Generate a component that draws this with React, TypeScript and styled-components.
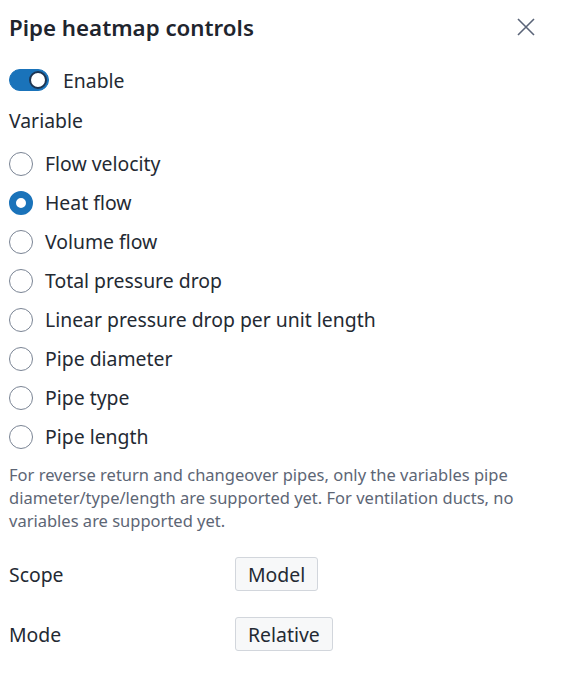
import { useState } from "react";
import styled, { createGlobalStyle } from "styled-components";

const GlobalStyle = createGlobalStyle`
  html, body {
    margin: 0;
    padding: 0;
    background: #ffffff;
  }
  body {
    font-family: "Noto Sans", "Open Sans", sans-serif;
    color: #242a33;
  }
`;

const Panel = styled.div`
  width: 568px;
  box-sizing: border-box;
  padding: 8px 9px 20px;
  display: flex;
  flex-direction: column;
`;

const Header = styled.div`
  display: flex;
  align-items: center;
  justify-content: space-between;
  height: 38px;
`;

const Title = styled.h2`
  margin: 0;
  font-size: 22.3px;
  font-weight: 600;
  color: #1f252e;
`;

const CloseButton = styled.button`
  width: 32px;
  height: 32px;
  margin-right: 17px;
  border: none;
  background: transparent;
  padding: 0;
  display: grid;
  place-items: center;
  cursor: pointer;
  color: #5a6478;
`;

const ToggleRow = styled.label`
  display: flex;
  align-items: center;
  gap: 14px;
  height: 40px;
  margin-top: 14px;
  font-size: 19.4px;
  cursor: pointer;
`;

const Track = styled.span<{ $on: boolean }>`
  width: 40px;
  height: 22px;
  border-radius: 11px;
  box-sizing: border-box;
  background: ${({ $on }) => ($on ? "#1a73ba" : "#ffffff")};
  border: 1px solid ${({ $on }) => ($on ? "#1a73ba" : "#7a8494")};
  display: flex;
  align-items: center;
  justify-content: ${({ $on }) => ($on ? "flex-end" : "flex-start")};
  padding: 0 1px;
`;

const Thumb = styled.span`
  width: 18px;
  height: 18px;
  border-radius: 50%;
  background: #ffffff;
  box-sizing: border-box;
  border: 2px solid #1c3553;
`;

const SectionLabel = styled.div`
  font-size: 19.4px;
  height: 40px;
  display: flex;
  align-items: center;
`;

const RadioList = styled.div`
  margin-top: 4px;
  display: flex;
  flex-direction: column;
`;

const RadioRow = styled.label`
  display: flex;
  align-items: center;
  gap: 12px;
  height: 39px;
  font-size: 19.4px;
  cursor: pointer;
`;

const RadioDot = styled.span<{ $checked: boolean }>`
  width: 24px;
  height: 24px;
  border-radius: 50%;
  box-sizing: border-box;
  flex-shrink: 0;
  border: ${({ $checked }) => ($checked ? "7px solid #1a73ba" : "1.5px solid #7a8494")};
  background: #ffffff;
`;

const Note = styled.p`
  margin: 7px 0 0;
  font-size: 16.5px;
  line-height: 23px;
  color: #5d6675;
  max-width: 548px;
`;

const FieldRows = styled.div`
  margin-top: 12px;
  display: flex;
  flex-direction: column;
`;

const FieldRow = styled.div`
  display: grid;
  grid-template-columns: 226px auto;
  align-items: center;
  height: 60px;
  font-size: 19.4px;
`;

const SelectButton = styled.button`
  justify-self: start;
  height: 34px;
  padding: 0 12px;
  font-family: inherit;
  font-size: 19.4px;
  color: #242a33;
  background: #f7f8f9;
  border: 1px solid #d2d6dc;
  border-radius: 3px;
  cursor: pointer;
`;

const variables = [
  "Flow velocity",
  "Heat flow",
  "Volume flow",
  "Total pressure drop",
  "Linear pressure drop per unit length",
  "Pipe diameter",
  "Pipe type",
  "Pipe length",
];

export default function App() {
  const [enabled, setEnabled] = useState(true);
  const [selected, setSelected] = useState("Heat flow");

  return (
    <>
      <GlobalStyle />
      <Panel>
        <Header>
          <Title>Pipe heatmap controls</Title>
          <CloseButton aria-label="Close">
            <svg width="18" height="18" viewBox="0 0 18 18" fill="none">
              <path d="M1 1L17 17M17 1L1 17" stroke="currentColor" strokeWidth="1.6" />
            </svg>
          </CloseButton>
        </Header>

        <ToggleRow onClick={() => setEnabled(!enabled)}>
          <Track $on={enabled}>
            <Thumb />
          </Track>
          Enable
        </ToggleRow>

        <SectionLabel>Variable</SectionLabel>

        <RadioList>
          {variables.map((v) => (
            <RadioRow key={v} onClick={() => setSelected(v)}>
              <RadioDot $checked={selected === v} />
              {v}
            </RadioRow>
          ))}
        </RadioList>

        <Note>
          For reverse return and changeover pipes, only the variables pipe
          diameter/type/length are supported yet. For ventilation ducts, no
          variables are supported yet.
        </Note>

        <FieldRows>
          <FieldRow>
            <span>Scope</span>
            <SelectButton>Model</SelectButton>
          </FieldRow>
          <FieldRow>
            <span>Mode</span>
            <SelectButton>Relative</SelectButton>
          </FieldRow>
        </FieldRows>
      </Panel>
    </>
  );
}
